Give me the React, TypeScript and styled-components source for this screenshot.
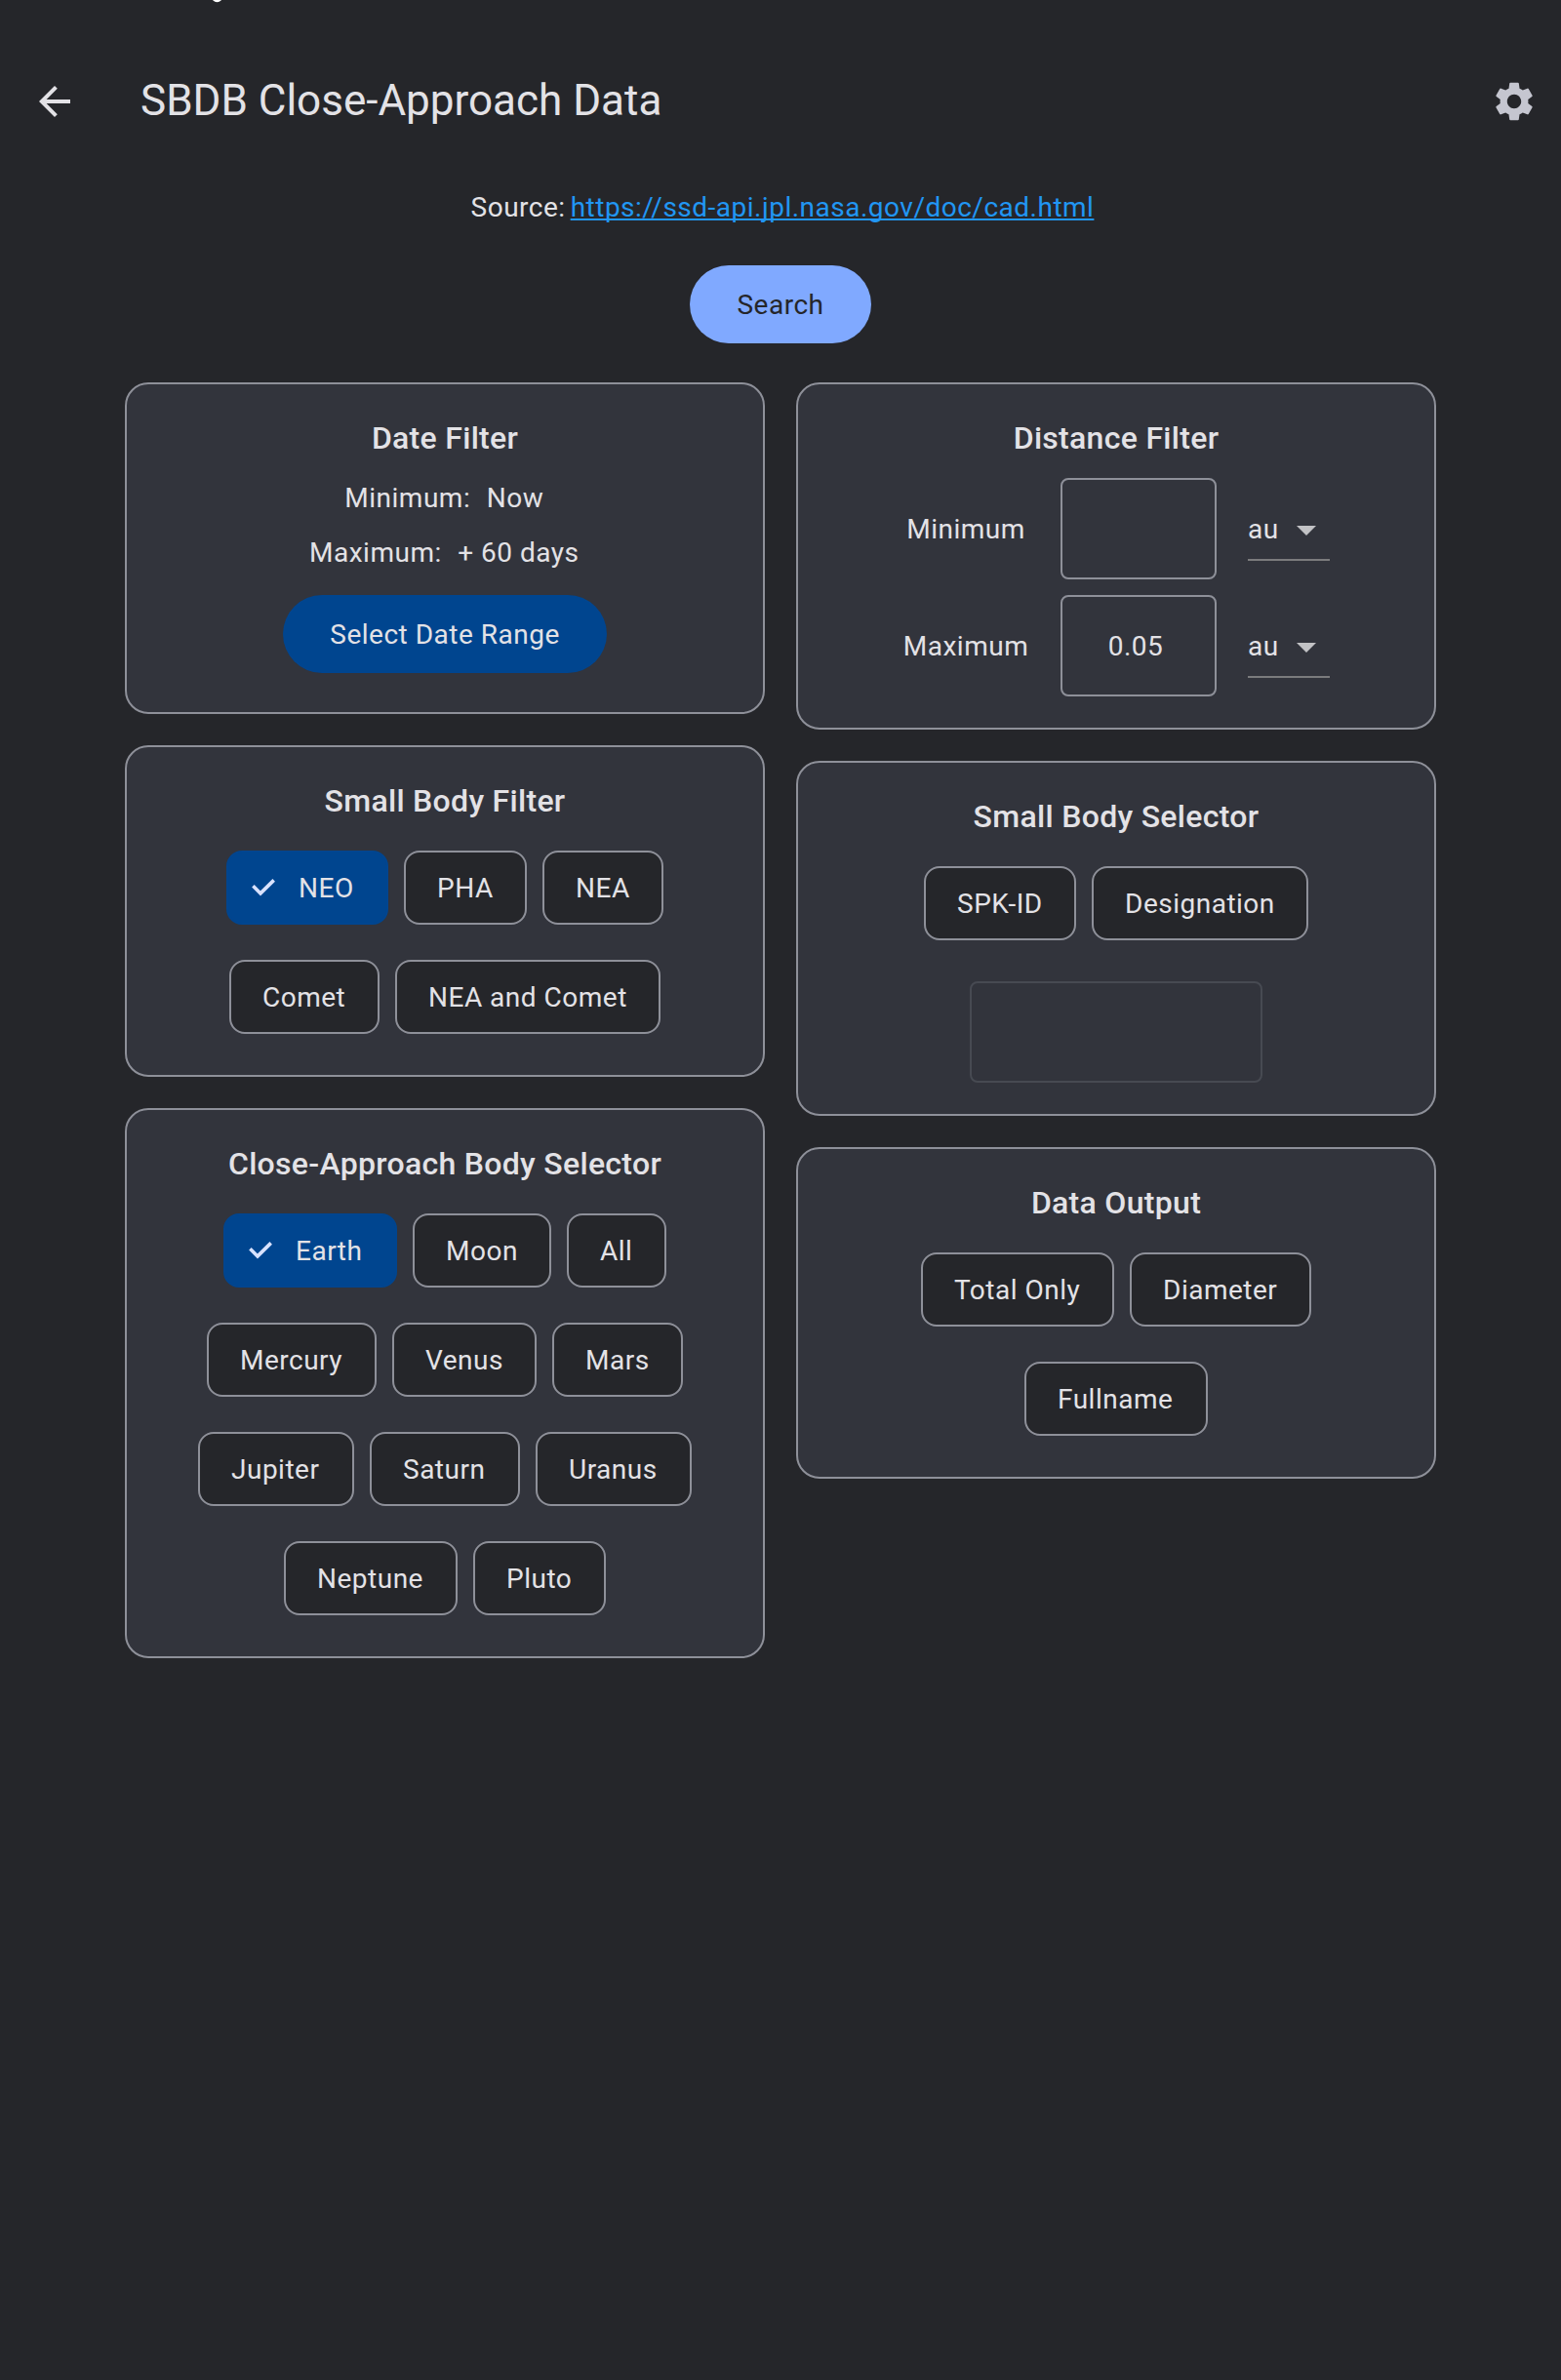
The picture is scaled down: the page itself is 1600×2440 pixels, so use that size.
import React from "react";
import styled, { createGlobalStyle } from "styled-components";
import { MdArrowBack, MdSettings, MdArrowDropDown } from "react-icons/md";

const color = {
  page: "#25262a",
  card: "#32343c",
  outline: "#8e9099",
  outlineDisabled: "#474a52",
  text: "#e3e2e6",
  muted: "#c5c6d0",
  primary: "#80a9ff",
  selected: "#00458f",
  check: "#d8e2ff",
  link: "#2196f3",
};

const GlobalStyle = createGlobalStyle`
  *, *::before, *::after { box-sizing: border-box; }
  body {
    margin: 0;
    background: ${color.page};
    color: ${color.text};
    font-family: Roboto, "Noto Sans", sans-serif;
    font-size: 28px;
    line-height: 40px;
    letter-spacing: 0.5px;
  }
  button, input { font: inherit; letter-spacing: inherit; color: inherit; margin: 0; }
`;

const Screen = styled.div`
  width: 1600px;
  height: 2440px;
  overflow: hidden;
  background: ${color.page};
`;

const StatusStrip = styled.div`
  height: 48px;
  padding-left: 218px;
  svg { display: block; }
`;

const AppBar = styled.header`
  display: flex;
  align-items: center;
  height: 112px;
  padding: 0 24px 0 32px;
`;

const IconButton = styled.button<{ $tint: string }>`
  display: flex;
  border: 0;
  padding: 0;
  background: none;
  color: ${(p) => p.$tint};
`;

const PageTitle = styled.h1`
  flex: 1;
  margin: 0 0 0 64px;
  padding-bottom: 2px;
  font-size: 44px;
  line-height: 56px;
  font-weight: 400;
  letter-spacing: 0;
`;

const Source = styled.p`
  display: flex;
  justify-content: center;
  gap: 5px;
  margin: 33px 0 39px;
  padding-left: 4px;
`;

const SourceLink = styled.a`
  color: ${color.link};
  text-decoration: underline;
  text-decoration-thickness: 1.5px;
  text-decoration-skip-ink: none;
  text-underline-offset: 2px;
`;

const Pill = styled.button<{ $tone: "primary" | "tonal" }>`
  display: block;
  height: 80px;
  margin: 0 auto;
  padding: 2px 48px 0;
  border: 0;
  border-radius: 40px;
  background: ${(p) => (p.$tone === "primary" ? color.primary : color.selected)};
  && { color: ${(p) => (p.$tone === "primary" ? color.page : color.text)}; }
`;

const Columns = styled.main`
  display: grid;
  grid-template-columns: 656px 656px;
  justify-content: center;
  align-items: start;
  gap: 32px;
  margin-top: 40px;
`;

const Column = styled.div`
  display: flex;
  flex-direction: column;
  gap: 32px;
`;

const Card = styled.section<{ $bottom?: number }>`
  padding: 31px 32px ${(p) => p.$bottom ?? 42}px;
  border: 2px solid ${color.outline};
  border-radius: 24px;
  background: ${color.card};
`;

const CardTitle = styled.h2`
  margin: 0;
  font-size: 32px;
  line-height: 48px;
  font-weight: 500;
  letter-spacing: 0.3px;
  text-align: center;
`;

const DateLines = styled.div`
  display: grid;
  gap: 16px;
  margin: 18px 0 23px;
`;

const DateLine = styled.div`
  display: flex;
  justify-content: center;
  gap: 16.5px;
  padding-right: 1.5px;
`;

const Chips = styled.div`
  display: flex;
  flex-wrap: wrap;
  justify-content: center;
  gap: 36px 16px;
  margin-top: 27px;
`;

const ChipBox = styled.button<{ $on: boolean; $width: number }>`
  display: flex;
  align-items: center;
  width: ${(p) => p.$width}px;
  height: 76px;
  padding: 2px 0 0 ${(p) => (p.$on ? 24 : 32)}px;
  border: 2px solid ${(p) => (p.$on ? color.selected : color.outline)};
  border-radius: 16px;
  background: ${(p) => (p.$on ? color.selected : color.page)};
  white-space: nowrap;
`;

const CheckMark = styled.svg`
  flex: none;
  width: 24px;
  height: 18px;
  margin: 0 24px 2px 0;
`;

const DistanceGrid = styled.div`
  display: grid;
  grid-template-columns: 130px 160px 84px;
  justify-content: center;
  align-items: center;
  gap: 16px 32px;
  margin-top: 17px;
`;

const FieldLabel = styled.label`
  padding-top: 2px;
  text-align: center;
`;

const Field = styled.input<{ $width: number }>`
  display: block;
  width: ${(p) => p.$width}px;
  height: 104px;
  padding: 1px 26px 0 20px;
  border: 2px solid ${color.outline};
  border-radius: 8px;
  background: transparent;
  text-align: center;
  &:disabled { border-color: ${color.outlineDisabled}; }
`;

const DisabledField = styled.div`
  display: flex;
  justify-content: center;
  margin-top: 42px;
`;

const UnitSelect = styled.div`
  display: flex;
  align-items: center;
  justify-content: space-between;
  height: 66px;
  padding-top: 3px;
  border-bottom: 2px solid #7b7b7d;
  svg { color: #c2c2c5; }
`;

type ChipSpec = [label: string, width: number];

function Chip({ label, width, on = false }: { label: string; width: number; on?: boolean }) {
  return (
    <ChipBox $on={on} $width={width}>
      {on && (
        <CheckMark viewBox="0 0 24 18" fill="none" stroke={color.check} strokeWidth="3.6">
          <path d="M1.4 7.3 L9 14.9 L22.7 1.4" />
        </CheckMark>
      )}
      {label}
    </ChipBox>
  );
}

function ChipCard({ title, chips, selected }: { title: string; chips: ChipSpec[]; selected?: string }) {
  return (
    <Card>
      <CardTitle>{title}</CardTitle>
      <Chips>
        {chips.map(([label, width]) => (
          <Chip key={label} label={label} width={width} on={label === selected} />
        ))}
      </Chips>
    </Card>
  );
}

function DistanceRow({ label, value }: { label: string; value: string }) {
  return (
    <>
      <FieldLabel>{label}</FieldLabel>
      <Field $width={160} defaultValue={value} />
      <UnitSelect>
        au
        <MdArrowDropDown size={48} />
      </UnitSelect>
    </>
  );
}

const smallBodies: ChipSpec[] = [
  ["NEO", 166], ["PHA", 126], ["NEA", 124],
  ["Comet", 154], ["NEA and Comet", 272],
];

const approachBodies: ChipSpec[] = [
  ["Earth", 178], ["Moon", 142], ["All", 102],
  ["Mercury", 174], ["Venus", 148], ["Mars", 134],
  ["Jupiter", 160], ["Saturn", 154], ["Uranus", 160],
  ["Neptune", 178], ["Pluto", 136],
];

const outputs: ChipSpec[] = [["Total Only", 198], ["Diameter", 186], ["Fullname", 188]];

export default function App() {
  return (
    <Screen>
      <GlobalStyle />
      <StatusStrip>
        <svg width="9" height="3" viewBox="0 0 9 3" fill="none">
          <path d="M0.8 -0.6 Q4.5 2.6 8.2 -0.6" stroke="#fff" strokeWidth="2.2" />
        </svg>
      </StatusStrip>
      <AppBar>
        <IconButton $tint={color.text} aria-label="Back">
          <MdArrowBack size={48} />
        </IconButton>
        <PageTitle>SBDB Close-Approach Data</PageTitle>
        <IconButton $tint={color.muted} aria-label="Settings">
          <MdSettings size={48} />
        </IconButton>
      </AppBar>
      <Source>
        <span>Source:</span>
        <SourceLink>https://ssd-api.jpl.nasa.gov/doc/cad.html</SourceLink>
      </Source>
      <Pill $tone="primary">Search</Pill>
      <Columns>
        <Column>
          <Card $bottom={40}>
            <CardTitle>Date Filter</CardTitle>
            <DateLines>
              <DateLine>
                <span>Minimum:</span>
                <span>Now</span>
              </DateLine>
              <DateLine>
                <span>Maximum:</span>
                <span>+ 60 days</span>
              </DateLine>
            </DateLines>
            <Pill $tone="tonal">Select Date Range</Pill>
          </Card>
          <ChipCard title="Small Body Filter" chips={smallBodies} selected="NEO" />
          <ChipCard title="Close-Approach Body Selector" chips={approachBodies} selected="Earth" />
        </Column>
        <Column>
          <Card $bottom={32}>
            <CardTitle>Distance Filter</CardTitle>
            <DistanceGrid>
              <DistanceRow label="Minimum" value="" />
              <DistanceRow label="Maximum" value="0.05" />
            </DistanceGrid>
          </Card>
          <Card $bottom={32}>
            <CardTitle>Small Body Selector</CardTitle>
            <Chips>
              <Chip label="SPK-ID" width={156} />
              <Chip label="Designation" width={222} />
            </Chips>
            <DisabledField>
              <Field $width={300} disabled />
            </DisabledField>
          </Card>
          <ChipCard title="Data Output" chips={outputs} />
        </Column>
      </Columns>
    </Screen>
  );
}
